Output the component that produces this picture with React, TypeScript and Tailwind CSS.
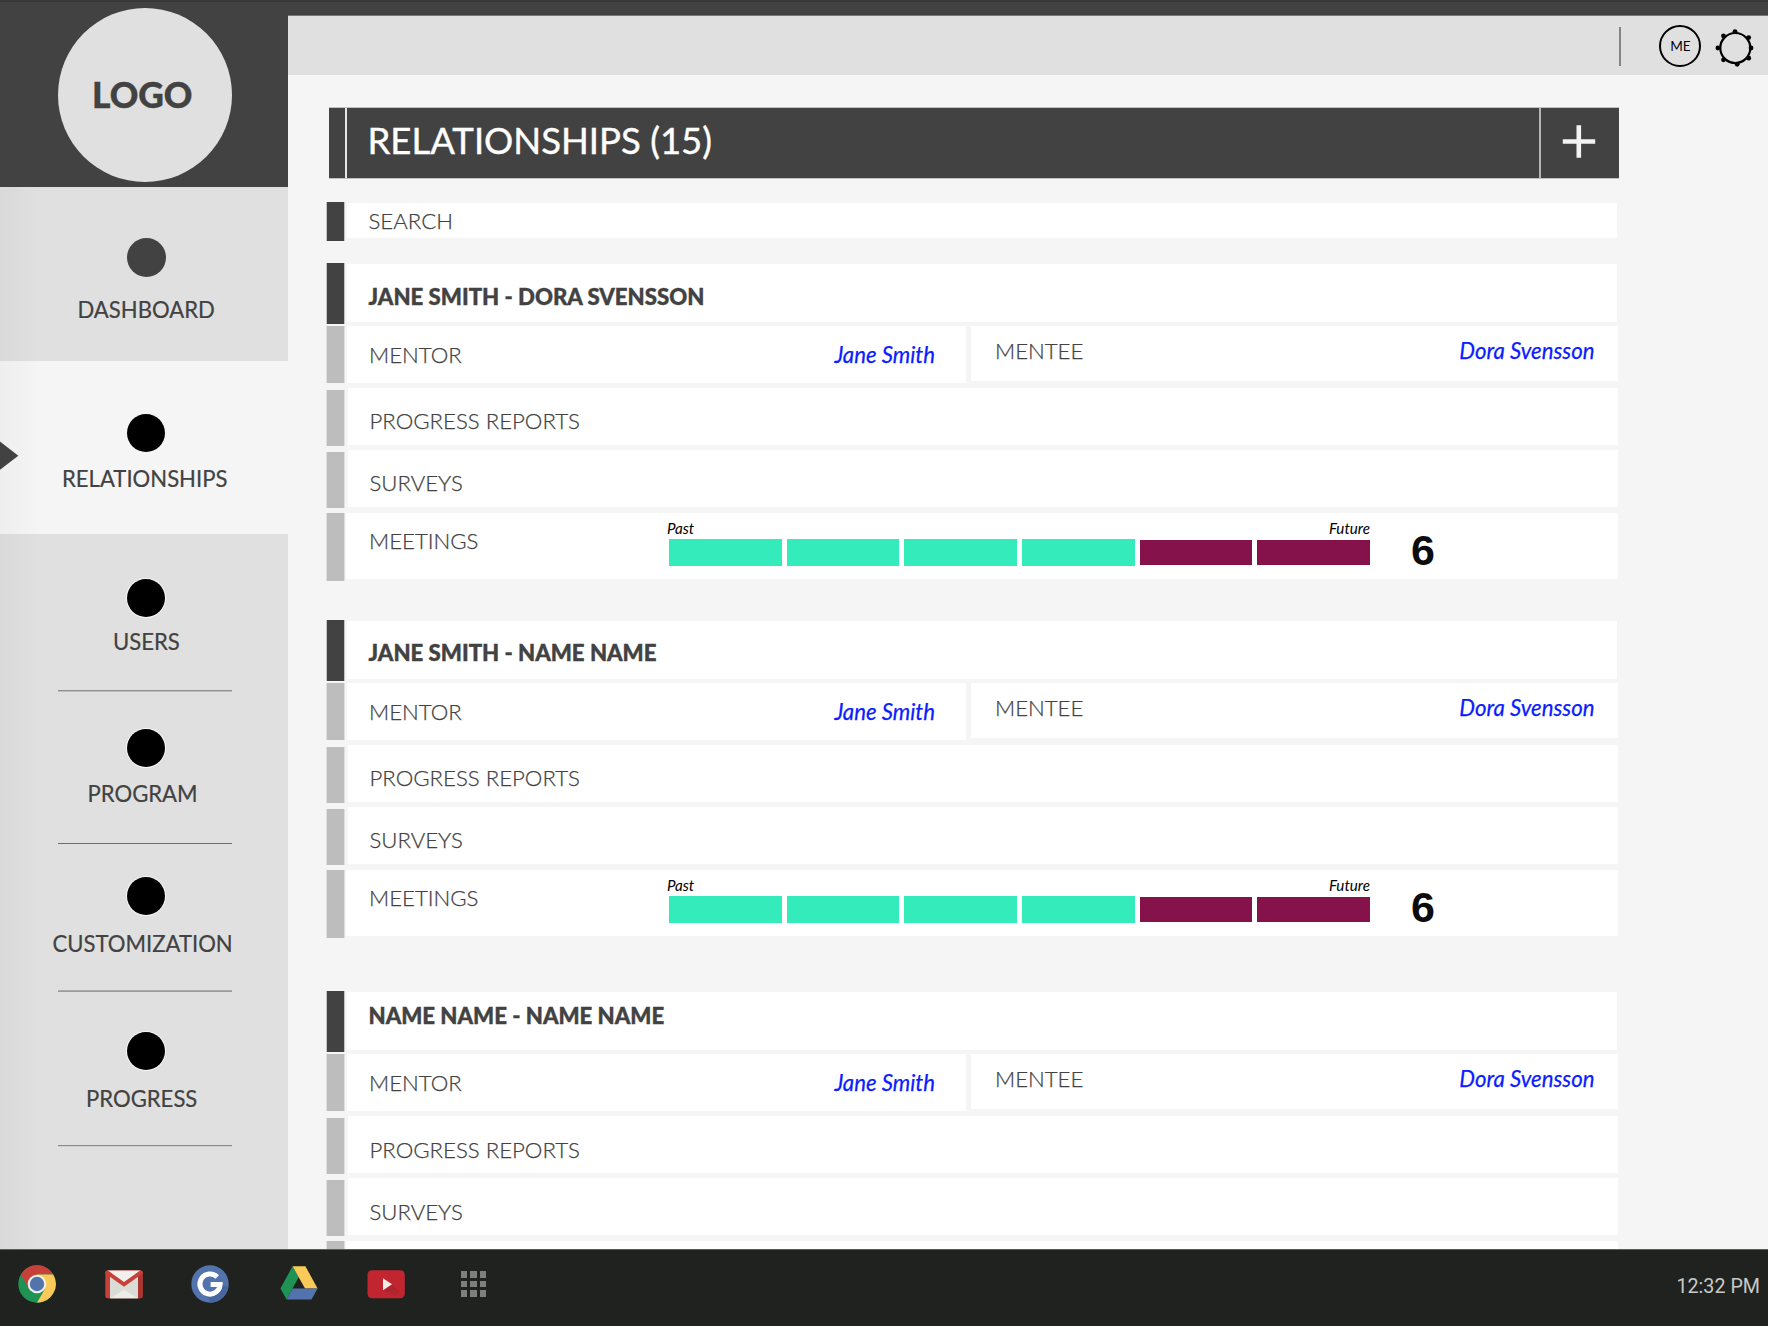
import React from "react";

type NavItem = {
  label: string;
  item: string;
  dot: string;
  text: string;
  line?: string;
};

const navItems: NavItem[] = [
  {
    label: "DASHBOARD",
    item: "h-[174px] bg-[#e0e0e0] pt-[51px]",
    dot: "h-[39px] w-[39px] bg-[#424242]",
    text: "mt-[21px] ml-[77.5px]",
  },
  {
    label: "RELATIONSHIPS",
    item: "h-[173px] bg-[#f5f5f5] pt-[52.5px]",
    dot: "h-[38px] w-[38px] bg-black",
    text: "mt-[15.5px] ml-[62px]",
  },
  {
    label: "USERS",
    item: "bg-[#e0e0e0] pt-[45px]",
    dot: "h-[38px] w-[38px] bg-black ring-1 ring-white/70",
    text: "mt-[13px] ml-[113px]",
    line: "mt-[36px] h-[2px] border-t border-[#8f8f8f] bg-[#bdbdbd]",
  },
  {
    label: "PROGRAM",
    item: "bg-[#e0e0e0] pt-[37px]",
    dot: "h-[38px] w-[38px] bg-black ring-1 ring-white/70",
    text: "mt-[15px] ml-[87.5px]",
    line: "mt-[37px] h-px bg-[#6e6e6e]",
  },
  {
    label: "CUSTOMIZATION",
    item: "bg-[#e0e0e0] pt-[33px]",
    dot: "h-[38px] w-[38px] bg-black ring-1 ring-white/70",
    text: "mt-[17px] ml-[52.5px]",
    line: "mt-[34px] h-[2px] border-b border-[#9c9c9c] bg-[#ababab]",
  },
  {
    label: "PROGRESS",
    item: "bg-[#e0e0e0] pt-[40px]",
    dot: "h-[38px] w-[38px] bg-black ring-1 ring-white/70",
    text: "mt-[17px] ml-[86px]",
    line: "mt-[34px] h-[2px] border-t border-[#8a8a8a] bg-[#d0d0d0]",
  },
];

function Sidebar() {
  return (
    <aside className="relative flex w-[288px] shrink-0 flex-col border-t-2 border-[#373737] bg-[#e0e0e0]">
      <div className="h-[185px] shrink-0 bg-[#424242] pt-[5.5px] pl-[58px]">
        <div className="h-[174px] w-[174px] rounded-full bg-[#e0e0e0] pt-[70px] pl-[34px] text-[35.3px] leading-[34px] font-black [-webkit-text-stroke:0.4px_#424242]">
          LOGO
        </div>
      </div>
      {navItems.map((n) => (
        <div key={n.label} className={`flex shrink-0 flex-col items-start ${n.item}`}>
          <div className={`ml-[127px] rounded-full ${n.dot}`} />
          <div className={`text-[22.1px] leading-6 [-webkit-text-stroke:0.2px_#424242] ${n.text}`}>{n.label}</div>
          {n.line && <div className={`ml-[58px] w-[174px] ${n.line}`} />}
        </div>
      ))}
      <div className="absolute top-[185px] bottom-0 left-0 w-[42px] bg-linear-to-r from-black/3 to-transparent" />
      <svg className="absolute top-[439px] left-0" width="19" height="29" viewBox="0 0 19 29">
        <path d="M0 .5 18.3 14.7 0 28.7Z" fill="#424242" />
      </svg>
    </aside>
  );
}

const gearDots = [
  [20, 3.6],
  [33.7, 9.6],
  [36, 20],
  [33.7, 30.2],
  [22.2, 36.3],
  [8.5, 31.8],
  [2.9, 20],
  [8.5, 8],
];

function TopBar() {
  return (
    <header className="flex h-[60px] shrink-0 border-t border-[#777777] bg-[#e0e0e0]">
      <div className="mt-[11px] ml-[1331px] h-[39px] w-[1.5px] bg-[#858585]" />
      <div className="mt-[8.5px] ml-[38px] flex h-[42px] w-[42px] justify-center rounded-full border-2 border-black pt-[11px] text-[13.6px] leading-4 text-[#000014]">
        <span className="ml-[2px]">ME</span>
      </div>
      <svg className="mt-[11.5px] ml-[14.5px]" width="40" height="40" viewBox="0 0 40 40">
        <circle cx="20.3" cy="20" r="15" fill="none" stroke="#000" strokeWidth="2.2" />
        {gearDots.map(([x, y]) => (
          <circle key={`${x}-${y}`} cx={x} cy={y} r="2.4" />
        ))}
      </svg>
    </header>
  );
}

function DarkBar({ className }: { className: string }) {
  return <div className={`w-[19px] shrink-0 border-x border-[#c4c4c4] bg-[#424242] bg-clip-padding ${className}`} />;
}

function GrayBar({ className }: { className: string }) {
  return <div className={`w-[19px] shrink-0 border-x border-[#dedede] bg-[#bdbdbd] bg-clip-padding ${className}`} />;
}

const segments = [true, true, true, true, false, false];

function MeetingsChart() {
  return (
    <>
      <div className="w-[701px] pt-[7px] font-normal">
        <div className="flex justify-between text-[15.2px] leading-4 text-black italic">
          <span className="-ml-[2px]">Past</span>
          <span>Future</span>
        </div>
        <div className="mt-[3px] flex h-[27px] gap-[5px]">
          {segments.map((past, i) => (
            <div key={i} className={past ? "flex-1 bg-[#33ebbb]" : "mt-px mb-px flex-1 bg-[#86124c]"} />
          ))}
        </div>
      </div>
      <div className="mt-[16px] ml-[41px] font-['Liberation_Sans',sans-serif] text-[43px] leading-[43px] font-bold text-[#0c0c0c]">
        6
      </div>
    </>
  );
}

type CardProps = {
  title: string;
  card: string;
  titlePad: string;
  reportPad: string;
  folded?: boolean;
};

function RelationshipCard({ title, card, titlePad, reportPad, folded }: CardProps) {
  return (
    <section className={`shrink-0 ${card}`}>
      <div className="flex h-[63px] items-start">
        <DarkBar className="h-[61px]" />
        <div
          className={`mt-px ml-[2px] h-[58px] w-[1270px] bg-white pl-[21.5px] text-[22.2px] leading-6 font-black [-webkit-text-stroke:0.4px_#424242] ${titlePad}`}
        >
          {title}
        </div>
      </div>
      <div className="flex h-[62px] items-start font-light [-webkit-text-stroke:0.25px]">
        <GrayBar className="h-[57px]" />
        <div className="ml-[2px] flex h-[57px] w-[619px] justify-between bg-white pt-[17px] pr-[31px] pl-[22px] leading-6">
          <span>MENTOR</span>
          <span className="font-normal text-[#0b1cff] italic">Jane Smith</span>
        </div>
        <div className="ml-[4.5px] flex h-[55px] w-[647.5px] justify-between bg-white pt-[13px] pr-[23.5px] pl-[24.5px] leading-6">
          <span>MENTEE</span>
          <span className="font-normal text-[#0b1cff] italic">Dora Svensson</span>
        </div>
      </div>
      <div className="flex h-[62px] items-start font-light [-webkit-text-stroke:0.25px]">
        <GrayBar className="mt-[2px] h-[56px]" />
        <div className={`ml-[3px] h-[57px] w-[1270px] bg-white pl-[21.5px] leading-6 ${reportPad}`}>PROGRESS REPORTS</div>
      </div>
      <div className="flex h-[63px] items-start font-light [-webkit-text-stroke:0.25px]">
        <GrayBar className="mt-[2px] h-[56px]" />
        <div className={`ml-[3px] h-[57px] w-[1270px] bg-white pl-[21.5px] leading-6 ${reportPad}`}>SURVEYS</div>
      </div>
      <div className="flex h-[68px] items-start font-light">
        <GrayBar className="h-[68px]" />
        <div className="ml-px flex h-[66px] w-[1272px] items-start bg-white pl-[23px]">
          {!folded && (
            <>
              <div className="w-[300px] pt-[16px] leading-6 [-webkit-text-stroke:0.25px]">MEETINGS</div>
              <MeetingsChart />
            </>
          )}
        </div>
      </div>
    </section>
  );
}

function Content() {
  return (
    <main className="flex min-h-0 flex-1 flex-col overflow-hidden pl-[38px] text-[22.2px]">
      <div className="mt-[32px] ml-[3px] flex h-[72px] w-[1290px] shrink-0 border-y border-[#c0c0c0] text-white">
        <div className="w-[16px] bg-[#424242]" />
        <div className="w-[2px] bg-[#e6e6e6]" />
        <h1 className="flex-1 bg-[#424242] pt-[12px] pl-[20.5px] text-[36.5px] leading-[40px] font-normal [-webkit-text-stroke:0.4px_#fff]">
          RELATIONSHIPS (15)
        </h1>
        <div className="w-[1.5px] bg-[#b5b5b5]" />
        <div className="w-[78.5px] bg-[#424242] pt-[17px] pl-[21.5px]">
          <svg width="34" height="34" viewBox="0 0 34 34">
            <path d="M.8 16.5H33.2M16.8 .3V32.7" stroke="#f3f3f3" strokeWidth="4.6" />
          </svg>
        </div>
      </div>
      <div className="mt-[23px] flex h-[39px] shrink-0 items-start">
        <DarkBar className="h-[38.5px]" />
        <div className="mt-px ml-[2px] h-[35px] w-[1270px] bg-white pt-[6px] pl-[21.5px] leading-6 font-light [-webkit-text-stroke:0.25px]">
          SEARCH
        </div>
      </div>
      <RelationshipCard title="JANE SMITH - DORA SVENSSON" card="mt-[22px]" titlePad="pt-[21px]" reportPad="pt-[21px]" />
      <RelationshipCard title="JANE SMITH - NAME NAME" card="mt-[39px]" titlePad="pt-[20px]" reportPad="pt-[21px]" />
      <RelationshipCard title="NAME NAME - NAME NAME" card="mt-[53px]" titlePad="pt-[12px]" reportPad="pt-[22px]" folded />
    </main>
  );
}

function ChromeIcon() {
  return (
    <svg className="mt-[15px] ml-[18px]" width="38" height="38" viewBox="0 0 38 38">
      <circle cx="19" cy="19" r="18.7" fill="#1f9353" />
      <path d="M2.9 9.5A18.7 18.7 0 0 1 35.2 9.5H19L10.9 23.8Z" fill="#c8403a" />
      <path d="M35.2 9.5A18.7 18.7 0 0 1 19 37.7L27.2 23.6 19 9.5Z" fill="#fac957" />
      <circle cx="19" cy="19" r="9.3" fill="#eeeeea" />
      <circle cx="19" cy="19" r="7.2" fill="#5273ab" />
    </svg>
  );
}

function GmailIcon() {
  return (
    <svg className="mt-[20px] ml-[49px]" width="38" height="29" viewBox="0 0 38 29">
      <rect x=".3" y=".3" width="37.4" height="28" rx="2.2" fill="#c8403a" />
      <path d="M33 4 37.7 1V26a2.3 2.3 0 0 1-2.3 2.3H33Z" fill="#a93632" />
      <path d="M5 4H33V28.3H5Z" fill="#dcdcd6" />
      <path d="M5 28.3 19 20 33 28.3Z" fill="#ecece8" />
      <path d="M2.5 .5H35.5L19 12.4Z" fill="#f1f0ec" />
      <path d="M.3 3.5 19 16.8 37.7 3.5V2.5L35.3 .4 19 12 2.7 .4 .3 2.5Z" fill="#c8403a" />
    </svg>
  );
}

function GoogleIcon() {
  return (
    <svg className="mt-[15px] ml-[48px]" width="38" height="38" viewBox="0 0 38 38">
      <circle cx="19" cy="19" r="18.7" fill="#5273ab" />
      <path d="M29.5 20 37.4 22A18.7 18.7 0 0 1 20 37.7L16 31Z" fill="#4766a0" />
      <path d="M26.2 11.9A10.1 10.1 0 1 0 29.1 19.6H19.6" fill="none" stroke="#fff" strokeWidth="5" />
    </svg>
  );
}

function DriveIcon() {
  return (
    <svg className="mt-[16px] ml-[51px]" width="38" height="34" viewBox="0 0 38 34">
      <path d="M12.6 .2 18.8 11 6.6 33.4 .4 22.6Z" fill="#1f9353" />
      <path d="M12.6 .2H25.4L37.6 22.6H25Z" fill="#fac957" />
      <path d="M12.6 22.6H37.6L31.5 33.4H6.6Z" fill="#5273ab" />
    </svg>
  );
}

function YouTubeIcon() {
  return (
    <svg className="mt-[20px] ml-[49px]" width="38" height="29" viewBox="0 0 38 29">
      <rect x=".5" y=".3" width="37.3" height="28" rx="4.5" fill="#c12630" />
      <path d="M24.5 14.2 33 22 28 26 16 20Z" fill="#b0242f" />
      <path d="M16 8.2V20.2L25 14.2Z" fill="#f3ece9" />
    </svg>
  );
}

function AppsIcon() {
  return (
    <div className="mt-[21px] ml-[55.5px] grid grid-cols-3 content-start gap-[3px]">
      {Array.from({ length: 9 }, (_, i) => (
        <div key={i} className="h-[6.5px] w-[6.5px] bg-[#7f7f7d]" />
      ))}
    </div>
  );
}

function Taskbar() {
  return (
    <footer className="flex h-[77px] shrink-0 items-start border-t border-[#5c5d5b] bg-[#20221f]">
      <ChromeIcon />
      <GmailIcon />
      <GoogleIcon />
      <DriveIcon />
      <YouTubeIcon />
      <AppsIcon />
      <div className="mt-[25px] mr-[8px] ml-auto font-[Roboto,sans-serif] text-[19.7px] leading-6 text-[#c9c9c7]">
        12:32 PM
      </div>
    </footer>
  );
}

export default function App() {
  return (
    <div className="flex h-[1326px] w-[1768px] flex-col overflow-hidden bg-[#f5f5f5] font-[Lato,sans-serif] text-[#424242]">
      <div className="flex min-h-0 flex-1">
        <Sidebar />
        <div className="flex min-w-0 flex-1 flex-col">
          <div className="h-[15px] shrink-0 border-t-2 border-[#373737] bg-[#424242]" />
          <TopBar />
          <Content />
        </div>
      </div>
      <Taskbar />
    </div>
  );
}
